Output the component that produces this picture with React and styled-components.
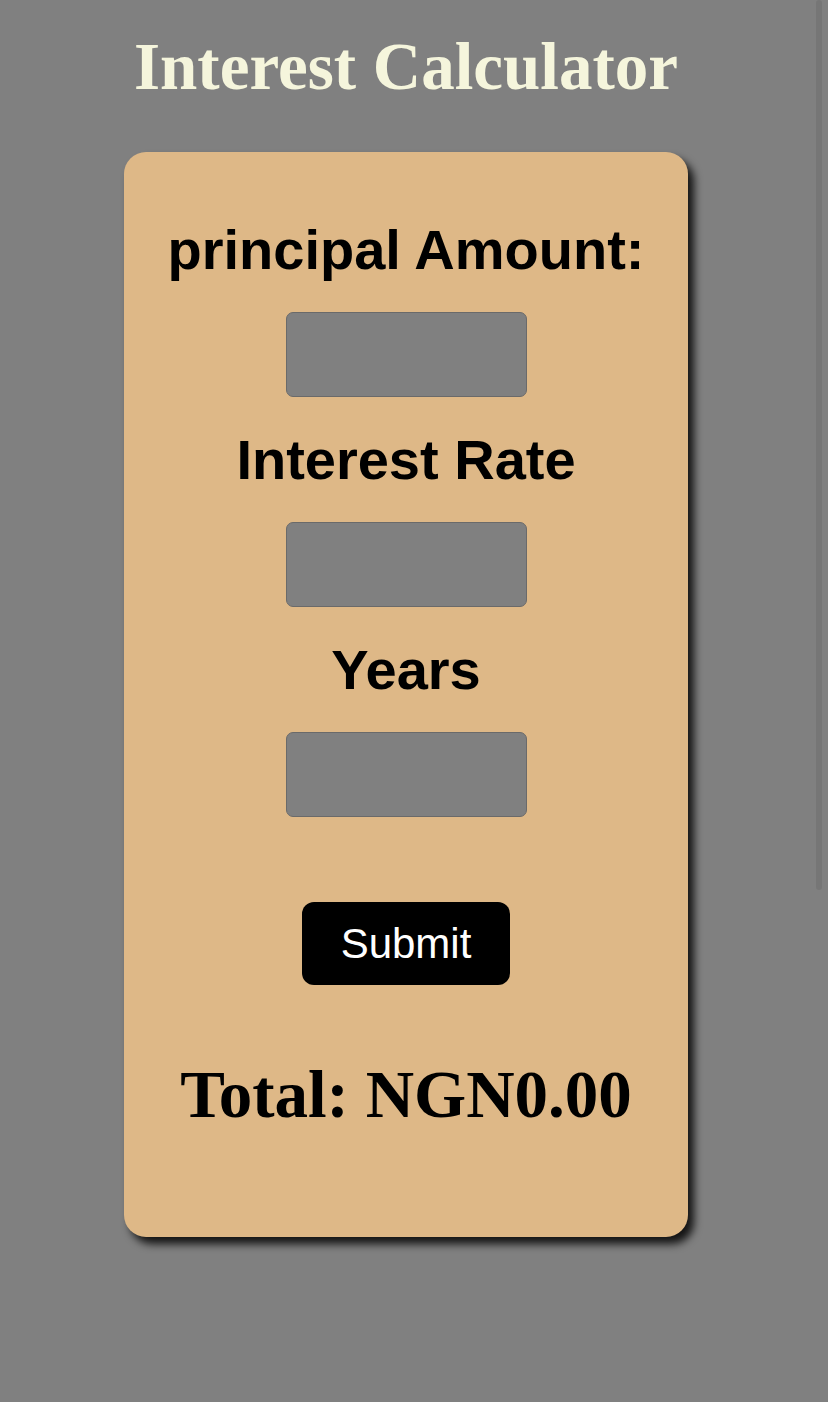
import React, { useState } from "react";
import styled, { createGlobalStyle } from "styled-components";

const GlobalStyle = createGlobalStyle`
  html, body {
    margin: 0;
    padding: 0;
    background-color: gray;
    min-height: 100%;
  }
  * {
    box-sizing: border-box;
  }
`;

const Page = styled.div`
  width: 812px;
  display: flex;
  flex-direction: column;
  align-items: center;
  padding-top: 33px;
  padding-bottom: 160px;
`;

const Title = styled.h1`
  margin: 0 0 52px;
  font-family: "Liberation Serif", "Times New Roman", serif;
  font-weight: bold;
  font-size: 67px;
  line-height: 1;
  color: beige;
`;

const Card = styled.form`
  width: 564px;
  display: flex;
  flex-direction: column;
  align-items: center;
  padding: 70px 0 109px;
  background-color: burlywood;
  border-radius: 22px;
  box-shadow: 6px 7px 8px rgba(0, 0, 0, 0.85);
`;

const Label = styled.label`
  margin: 0 0 34px;
  font-family: "Liberation Sans", Arial, sans-serif;
  font-weight: bold;
  font-size: 56px;
  line-height: 1;
  color: #000;
`;

const Field = styled.input`
  width: 241px;
  height: 85px;
  margin: 0 0 ${(p) => (p.$last ? "85px" : "35px")};
  background-color: gray;
  border: 1.5px solid #6a6a6a;
  border-radius: 7px;
  font-size: 32px;
  outline: none;
`;

const SubmitButton = styled.button`
  width: 208px;
  height: 83px;
  margin-bottom: 76px;
  background-color: #000;
  color: #fff;
  border: none;
  border-radius: 12px;
  font-family: "Liberation Sans", Arial, sans-serif;
  font-size: 42px;
  cursor: pointer;
`;

const Total = styled.h2`
  margin: 0;
  font-family: "Liberation Serif", "Times New Roman", serif;
  font-weight: bold;
  font-size: 67px;
  line-height: 1;
  color: #000;
`;

const ScrollThumb = styled.div`
  position: fixed;
  top: 0;
  left: 816px;
  width: 6px;
  height: 890px;
  border-radius: 3px;
  background-color: rgba(0, 0, 0, 0.08);
`;

const App = () => {
  const [principal, setPrincipal] = useState("");
  const [rate, setRate] = useState("");
  const [years, setYears] = useState("");
  const [total, setTotal] = useState(0);

  const handleSubmit = (e) => {
    e.preventDefault();
    const p = parseFloat(principal) || 0;
    const r = parseFloat(rate) || 0;
    const y = parseFloat(years) || 0;
    setTotal(p + (p * r * y) / 100);
  };

  return (
    <>
      <GlobalStyle />
      <Page>
        <Title>Interest Calculator</Title>
        <Card onSubmit={handleSubmit}>
          <Label>principal Amount:</Label>
          <Field
            type="number"
            value={principal}
            onChange={(e) => setPrincipal(e.target.value)}
          />
          <Label>Interest Rate</Label>
          <Field
            type="number"
            value={rate}
            onChange={(e) => setRate(e.target.value)}
          />
          <Label>Years</Label>
          <Field
            $last
            type="number"
            value={years}
            onChange={(e) => setYears(e.target.value)}
          />
          <SubmitButton type="submit">Submit</SubmitButton>
          <Total>Total: NGN{total.toFixed(2)}</Total>
        </Card>
      </Page>
      <ScrollThumb />
    </>
  );
};

export default App;
